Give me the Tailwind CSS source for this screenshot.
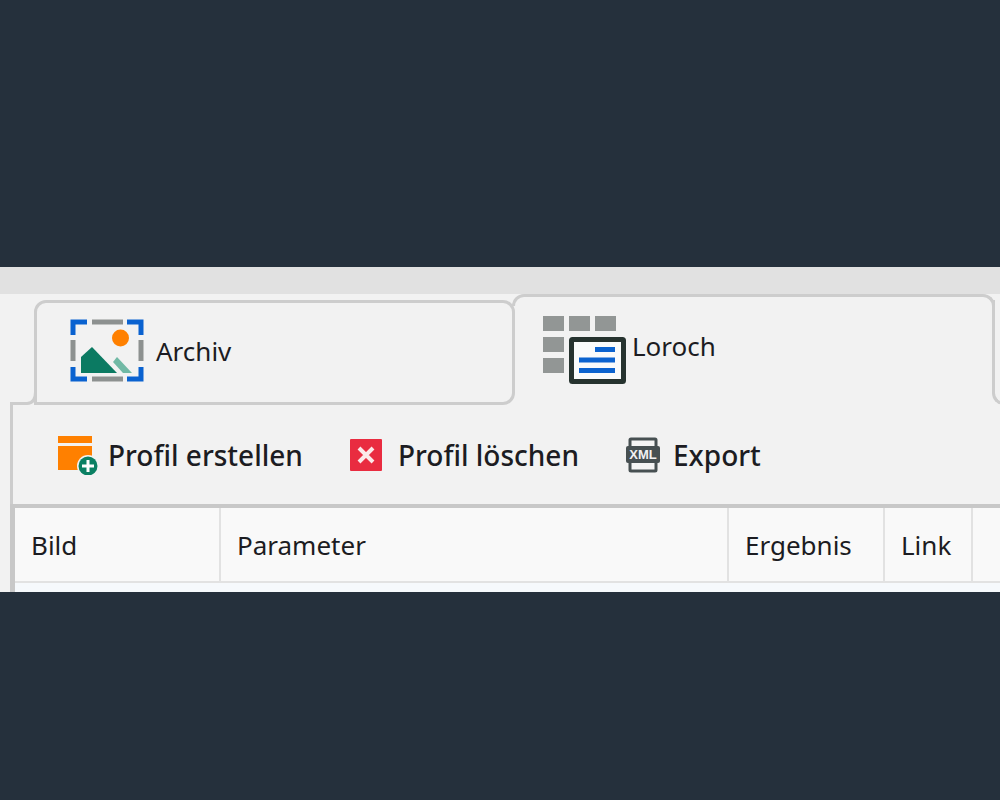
<!DOCTYPE html>
<html lang="de">
<head>
  <meta charset="UTF-8" />
  <meta name="viewport" content="width=device-width, initial-scale=1" />
  <title>Loroch</title>
  <script src="https://cdn.jsdelivr.net/npm/@tailwindcss/browser@4"></script>
</head>
<body class="min-h-screen overflow-x-hidden bg-[#25303c] pt-[267px] font-['Noto_Sans','Open_Sans',sans-serif] text-[#1c1c22]">
  <main class="overflow-hidden bg-[#f2f2f2]">
    <div class="h-[27px] bg-[#e1e1e1]"></div>

    <!-- Tabs -->
    <div class="flex h-[111px] items-end pl-[10px]" role="tablist">
      <svg class="-mr-[3px] h-[105px] w-[27px] shrink-0" viewBox="0 0 27 105" fill="none" stroke="#cdcdcd" stroke-width="3" aria-hidden="true">
        <path d="M0 103.500H17Q25.500 103 25.500 92" />
      </svg>
      <button role="tab" aria-selected="false" class="flex h-[105px] w-[481px] shrink-0 items-start gap-3 rounded-t-[12px] rounded-br-[12px] border-[3px] border-[#cdcdcd] pt-4 pl-[33px] text-[26px] leading-8">
        <svg class="h-16 w-[74px]" viewBox="0 0 74 64" aria-hidden="true">
          <g fill="none" stroke="#0a62d0" stroke-width="5">
            <path d="M17 3H3V16M57 3H71V16M3 48V60H17M71 48V60H57" />
          </g>
          <path d="M22 3H53M22 60H53M3 21V42M71 21V42" fill="none" stroke="#8d9190" stroke-width="5" />
          <circle cx="50.500" cy="19" r="8.500" fill="#ff8000" />
          <path d="M11 54V38L22 28L47 54Z" fill="#0b7a62" />
          <path d="M43 43L47 38L62 54H53Z" fill="#71b9a5" />
        </svg>
        <span class="pt-4">Archiv</span>
      </button>
      <button role="tab" aria-selected="true" class="relative flex h-[111px] w-[477px] shrink-0 items-start gap-1 pt-5 pl-[27px] text-[26px] leading-8">
        <span class="absolute top-0 -right-[3px] -left-[3px] h-3 rounded-t-[12px] border-x-[3px] border-t-[3px] border-[#cdcdcd]"></span>
        <svg class="h-[70px] w-[86px]" viewBox="0 0 86 70" aria-hidden="true">
          <path d="M1 2H22V17H1ZM27 2H48V17H27ZM53 2H74V17H53ZM1 23H22V38H1ZM1 44H22V59H1Z" fill="#929695" />
          <rect x="29.500" y="25.500" width="52" height="42" rx="1" fill="#f9fbfb" stroke="#26332f" stroke-width="5" />
          <path d="M53 35.500H73M37 46H73M37 56.500H73" stroke="#0b63cf" stroke-width="5" />
        </svg>
        <span class="pt-4">Loroch</span>
      </button>
      <button role="tab" aria-selected="false" aria-label="Weitere" class="h-[105px] w-20 shrink-0 rounded-bl-[12px] border-b-[3px] border-l-[3px] border-[#cdcdcd]"></button>
    </div>

    <section class="pl-[10px]">
      <!-- Toolbar -->
      <div class="flex h-[99px] items-center border-l-[3px] border-[#cdcdcd] pl-11 text-[28px] leading-9 font-medium" role="toolbar">
        <button class="flex items-center gap-[10px]">
          <svg class="h-10 w-[41px]" viewBox="0 0 41 40" aria-hidden="true">
            <path d="M1 1H35V8H1ZM1 11H35V35H1Z" fill="#ff8000" />
            <circle cx="31" cy="31" r="11" fill="#f2f2f2" />
            <circle cx="31" cy="31" r="9.500" fill="#0b8063" />
            <path d="M31 25V37M25 31H37" stroke="#fff" stroke-width="3" />
          </svg>
          <span>Profil erstellen</span>
        </button>
        <button class="ml-[47px] flex items-center gap-4">
          <svg class="size-8" viewBox="0 0 32 32" aria-hidden="true">
            <rect width="32" height="32" rx="1" fill="#e92c40" />
            <path d="M9 9L23 23M23 9L9 23" stroke="#fbe9e9" stroke-width="4" />
          </svg>
          <span>Profil löschen</span>
        </button>
        <button class="ml-[47px] flex items-center gap-[13px]">
          <svg class="h-9 w-[34px]" viewBox="0 0 34 36" aria-hidden="true">
            <rect x="4" y="2" width="26" height="32" rx="1" fill="#f4f4f4" stroke="#475052" stroke-width="3" />
            <rect y="9" width="34" height="17" rx="2" fill="#475052" />
            <text x="17" y="22" text-anchor="middle" font-family="Liberation Sans" font-size="13" font-weight="700" fill="#f2f2f2">XML</text>
          </svg>
          <span>Export</span>
        </button>
      </div>

      <table class="w-full table-fixed border-separate border-spacing-0 border-t-4 border-l-[5px] border-[#c8c8c8] bg-[#f9f9f9] text-left text-[26px] leading-8">
        <colgroup>
          <col class="w-[206px]" />
          <col />
          <col class="w-[156px]" />
          <col class="w-[88px]" />
          <col class="w-[27px]" />
        </colgroup>
        <thead>
          <tr class="h-[75px]">
            <th scope="col" class="border-r-2 border-b-2 border-[#e2e2e2] pl-4 font-normal">Bild</th>
            <th scope="col" class="border-r-2 border-b-2 border-[#e2e2e2] pl-4 font-normal">Parameter</th>
            <th scope="col" class="border-r-2 border-b-2 border-[#e2e2e2] pl-4 font-normal">Ergebnis</th>
            <th scope="col" class="border-r-2 border-b-2 border-[#e2e2e2] pl-4 font-normal">Link</th>
            <td class="border-b-2 border-[#e2e2e2]"></td>
          </tr>
        </thead>
        <tbody>
          <tr class="h-[9px] bg-[#f6f9fc]"><td colspan="5"></td></tr>
        </tbody>
      </table>
    </section>
  </main>
</body>
</html>
